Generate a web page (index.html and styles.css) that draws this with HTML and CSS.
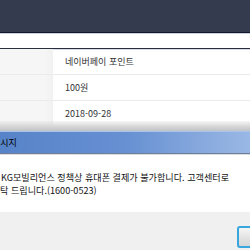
FILE: index.html
```html
<!DOCTYPE html>
<html lang="ko">
<head>
<meta charset="utf-8">
<link rel="stylesheet" href="styles.css">
</head>
<body>
<div class="page">
  <div class="topbar"></div>
  <div class="strip"></div>
  <div class="table">
    <div class="row"><div class="th"></div><div class="td">네이버페이 포인트</div></div>
    <div class="row"><div class="th"></div><div class="td">100원</div></div>
    <div class="row"><div class="th"></div><div class="td">2018-09-28</div></div>
  </div>
  <div class="dialog">
    <div class="frame"></div>
    <div class="titlebar"><span class="title">메시지</span></div>
    <div class="body">
      <p class="msg">KG모빌리언스 정책상 휴대폰 결제가 불가합니다. 고객센터로</p>
      <p class="msg second">탁 드립니다.(1600-0523)</p>
    </div>
    <div class="footer"><div class="btn"></div></div>
  </div>
</div>
</body>
</html>
```

FILE: styles.css
```css
html, body { margin: 0; padding: 0; }
body { background: #fff; font-family: "Noto Sans CJK KR", "Noto Sans", sans-serif; }
.page { position: relative; width: 250px; height: 250px; overflow: hidden; }
.topbar { height: 32px; background: #353b4e; border-bottom: 1px solid #14172a; box-shadow: 0 1px 0 #c9d0e0; }
.strip { height: 14px; margin-top: 1px; background: #fff; }
.table { border-top: 1px solid #2a2d3a; box-shadow: inset 0 1px 0 #d8dce8; }
.row { display: flex; height: 25px; border-bottom: 1px solid #ebebeb; }
.th { width: 53px; background: linear-gradient(to right, #f6f6f6 85%, #f1f1f1); }
.td { padding-left: 12px; display: flex; align-items: center; font-size: 9px; color: #333; letter-spacing: 0; }
.dialog { position: absolute; left: 0; top: 121px; width: 250px; height: 129px; display: flex; flex-direction: column; }
.frame { height: 10px; background: linear-gradient(to bottom, rgba(225,225,225,0.3), #d4d4d4 60%, #bfc3c8); }
.titlebar { height: 21px; display: flex; align-items: center; background: linear-gradient(to right, #5783c8, #6690d2 50%, #86a8dd 80%, #9ab8e5); border-top: 1px solid #a9c3ea; border-bottom: 1px solid #6f7f96; box-sizing: border-box; height: 23px; }
.title { margin-left: -8px; font-size: 9px; color: #000; }
.body { height: 58px; background: #fff; padding-top: 16px; box-sizing: border-box; border-top: 1px solid #d9dde3; }
.msg { margin: 0; font-size: 9.1px; line-height: 13px; color: #111; padding-left: 1px; white-space: nowrap; }
.msg.second { padding-left: 0; }
.footer { flex: 1; background: #f0f0f0; padding: 14px 0 0 237px; }
.btn { width: 70px; height: 22px; box-sizing: border-box; border: 2px solid #3aa6de; border-radius: 3px; background: linear-gradient(to bottom, #f6f6f6, #e4e4e4 50%, #d6d6d6); }
```
